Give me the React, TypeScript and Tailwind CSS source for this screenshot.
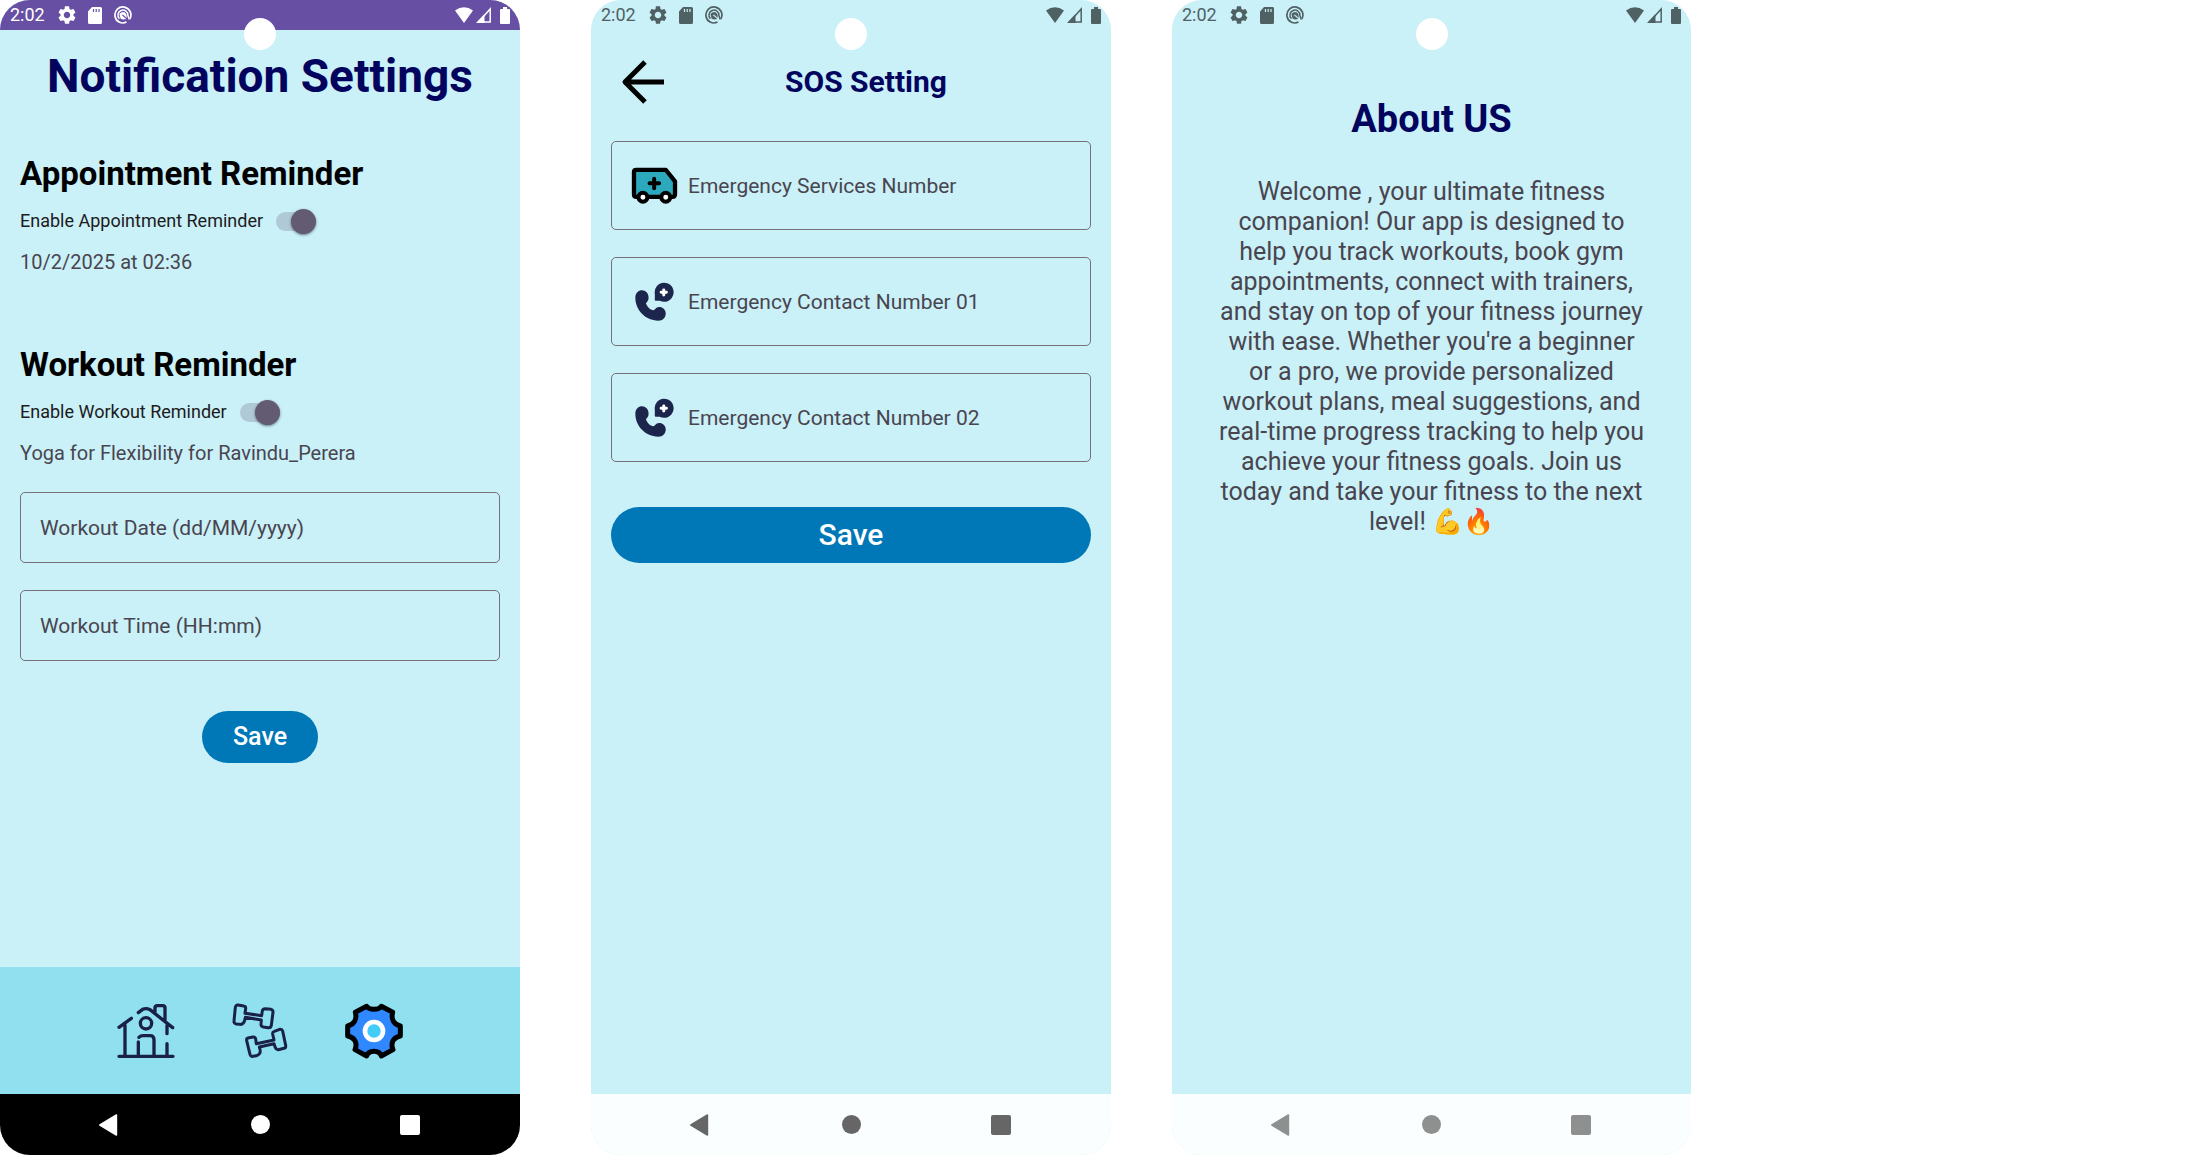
import type { ReactNode } from "react";

function StatusBar({ tone, className }: { tone: string; className: string }) {
  return (
    <header className={`relative flex h-[30px] shrink-0 items-center px-[10px] ${className}`}>
      <span className="w-[48px] text-lg leading-[30px]">2:02</span>
      <svg className="h-[18px] w-[18px]" viewBox="2 2 20 20" fill="currentColor" aria-hidden="true">
        <path d="M19.14 12.94c.04-.3.06-.61.06-.94 0-.32-.02-.64-.07-.94l2.03-1.58c.18-.14.23-.41.12-.61l-1.92-3.32c-.12-.22-.37-.29-.59-.22l-2.39.96c-.5-.38-1.03-.7-1.62-.94l-.36-2.54c-.04-.24-.24-.41-.48-.41h-3.84c-.24 0-.43.17-.47.41l-.36 2.54c-.59.24-1.13.57-1.62.94l-2.39-.96c-.22-.08-.47 0-.59.22L2.74 8.87c-.12.21-.08.47.12.61l2.03 1.58c-.05.3-.09.63-.09.94s.02.64.07.94l-2.03 1.58c-.18.14-.23.41-.12.61l1.92 3.32c.12.22.37.29.59.22l2.39-.96c.5.38 1.03.7 1.62.94l.36 2.54c.05.24.24.41.48.41h3.84c.24 0 .44-.17.47-.41l.36-2.54c.59-.24 1.13-.56 1.62-.94l2.39.96c.22.08.47 0 .59-.22l1.92-3.32c.12-.22.07-.47-.12-.61l-2.01-1.58zM12 15.6c-1.98 0-3.6-1.62-3.6-3.6s1.62-3.6 3.6-3.6 3.6 1.62 3.6 3.6-1.62 3.6-3.6 3.6z" />
      </svg>
      <svg className="ml-3 h-[17px] w-[14px]" viewBox="0 0 14 17" aria-hidden="true">
        <path d="M4 0h8.500a1.500 1.500 0 0 1 1.500 1.500v14a1.500 1.500 0 0 1-1.500 1.500h-11a1.500 1.500 0 0 1-1.500-1.500V4.500z" fill="currentColor" />
        <path d="M5.500 2v3M8.200 2v3M11 2v3" stroke={tone} strokeWidth="1.200" />
      </svg>
      <svg className="ml-3 h-[18px] w-[18px]" viewBox="0 0 18 18" fill="none" stroke="currentColor" aria-hidden="true">
        <path d="M12.500 16.100A8 8 0 1 1 15.800 13" strokeWidth="1.700" />
        <path d="M5.400 12.700A5 5 0 1 1 13.900 9.500L15.200 13.500" strokeWidth="1.500" />
        <path d="M5.500 8.300Q7.500 5.500 10.500 6.500Q13 7.800 12.300 11.500L10.200 9.200Q8.500 7.800 7.500 9.200L11.800 12.800Q8.500 14 6.500 12.200" fill="currentColor" strokeWidth=".5" />
      </svg>
      <svg className="ml-auto h-4 w-[18px]" viewBox="0 0 18 16" fill="currentColor" aria-hidden="true">
        <path d="M0 3.500Q9-3 18 3.500L9 16z" />
      </svg>
      <svg className="ml-[3px] h-4 w-[15px]" viewBox="0 0 15 16" aria-hidden="true">
        <path d="M2.500 14.900L14.200 2V14.900z" fill="none" stroke="currentColor" strokeWidth="1.500" />
        <path d="M0 16L8.500 7V16z" fill="currentColor" />
      </svg>
      <svg className="ml-[9px] h-[17px] w-[10px]" viewBox="0 0 10 17" fill="currentColor" aria-hidden="true">
        <path d="M3 0h4v2h2q1 0 1 1v13q0 1-1 1H1q-1 0-1-1V3q0-1 1-1h2z" />
      </svg>
      <span className="absolute left-1/2 top-[18px] size-8 -translate-x-1/2 rounded-full bg-white" />
    </header>
  );
}

function SystemNav({ className }: { className: string }) {
  return (
    <nav aria-label="System" className={`flex h-[61px] shrink-0 items-center justify-between pl-[98px] pr-[100px] ${className}`}>
      <button type="button" aria-label="Back">
        <svg className="size-[22px]" viewBox="0 0 22 22" fill="currentColor" aria-hidden="true">
          <path d="M1.500 10.200L18 .300Q19.200 0 19.200 1.300V20.700Q19.200 22 18 21.700L1.500 11.800Q.300 11 1.500 10.200z" />
        </svg>
      </button>
      <button type="button" aria-label="Home" className="size-[19px] rounded-full bg-current" />
      <button type="button" aria-label="Recent apps" className="size-5 rounded-xs bg-current" />
    </nav>
  );
}

function Phone({ label, className, children }: { label: string; className: string; children: ReactNode }) {
  return (
    <section aria-label={label} className={`flex min-h-screen flex-col overflow-hidden rounded-[30px] bg-[#caf0f8] ${className}`}>
      {children}
    </section>
  );
}

function Toggle({ id, label }: { id: string; label: string }) {
  return (
    <div className="flex items-center gap-[13px] px-5">
      <label htmlFor={id} className="text-lg leading-[26px] text-[#1d1b20]">{label}</label>
      <input
        id={id}
        type="checkbox"
        role="switch"
        defaultChecked
        className="relative h-[19px] w-10 appearance-none rounded-full bg-[#b0c9d6] after:absolute after:-top-[3px] after:right-0 after:size-[25px] after:rounded-full after:bg-[#625b71] after:shadow-sm after:shadow-black/40"
      />
    </div>
  );
}

function Field({ label, className, icon }: { label: string; className: string; icon?: ReactNode }) {
  return (
    <div className={`mx-5 flex items-center rounded-[5px] border border-[#757079] ${className}`}>
      {icon}
      <input
        type="text"
        aria-label={label}
        placeholder={label}
        className="h-full min-w-0 flex-1 bg-transparent text-[21px] text-[#49454f] outline-none placeholder:text-[#49454f] placeholder:opacity-100"
      />
    </div>
  );
}

function HomeIcon() {
  return (
    <svg className="size-[58px]" viewBox="51 40 174 174" fill="none" stroke="#1a2149" strokeWidth="10" strokeLinecap="round" strokeLinejoin="round" aria-hidden="true">
      <path d="M57 203H219M75 198V110M57 116L94 89M115 72L128 62Q139 57 150 63L218 117M165 70V58Q165 51 172 51H188Q195 51 195 58V98M201 110V135M201 165V200M115 160V200M117 146Q121 141 130 141H150Q162 141 162 153V200" />
      <circle cx="138" cy="104" r="17" />
    </svg>
  );
}

function DumbbellsIcon() {
  return (
    <svg className="size-[58px]" viewBox="392 36 174 174" fill="none" stroke="#1a2149" strokeWidth="9" strokeLinejoin="round" aria-hidden="true">
      <path d="M413 45L430 48Q437 49 436 56L434 70L484 77L486 62Q488 56 494 56L512 58Q519 60 518 67L513 106Q511 114 504 113L489 111Q481 109 482 101L483 90L435 82Q433 96 429 99Q425 104 418 103L408 102Q400 100 401 93L405 52Q407 44 413 45Z" />
      <path d="M443 144L458 141Q465 140 466 147L468 161L521 150L517 132Q516 126 522 124L538 118Q545 117 547 123L556 166Q557 174 551 175L534 179Q528 180 525 173L521 161L477 171Q482 186 478 190Q474 196 468 197L458 199Q451 200 449 193L439 152Q438 145 443 144Z" />
    </svg>
  );
}

function GearIcon() {
  return (
    <svg className="size-[58px]" viewBox="733 36 174 174" aria-hidden="true">
      <path d="M798 49C806 61 834 61 842 49L876 67C870 88 880 103 899 108V138C880 141 868 158 877 179L842 198C835 179 805 179 798 198L763 179C772 158 760 141 741 138V108C760 103 770 88 764 67Z" fill="#2f88ff" stroke="#000" strokeWidth="15" strokeLinejoin="round" />
      <circle cx="820" cy="123" r="27" fill="#43ccf8" stroke="#fff" strokeWidth="14" />
    </svg>
  );
}

function AmbulanceIcon() {
  return (
    <svg className="ml-[19px] mr-[10px] h-[39px] w-[47px] shrink-0" viewBox="62 106 142 117" stroke="#000" strokeLinecap="round" strokeLinejoin="round" aria-hidden="true">
      <path d="M78 117H167L195 152V190Q195 199 187 199H78Q71 199 71 192V124Q71 117 78 117Z" fill="#2ca9bc" strokeWidth="13" />
      <circle cx="98" cy="200" r="13.500" fill="#fff" strokeWidth="12" />
      <circle cx="167" cy="200" r="13.500" fill="#fff" strokeWidth="12" />
      <path d="M132 144V173M118 158H147" strokeWidth="12" />
    </svg>
  );
}

function CallIcon() {
  return (
    <svg className="ml-[23px] mr-[14px] size-[39px] shrink-0" viewBox="75 454 118 118" fill="#1c264d" aria-hidden="true">
      <path d="M96 479C86 479 76 487 76 502C76 540 107 571 145 571C160 571 168 560 168 549C168 538 158 530 149 530C141 530 138 534 134 538C126 543 112 530 108 518C113 513 117 508 116 500C116 488 107 479 96 479Z" />
      <path d="M162 456A29 29 0 1 1 150 511H138Q134 511 135 506V490A29 29 0 0 1 162 456Z" />
      <path d="M162 478V493M154 485H170" stroke="#fff" strokeWidth="9" strokeLinecap="round" />
    </svg>
  );
}

export default function App() {
  return (
    <main className="grid min-h-screen grid-cols-[520fr_71fr_520fr_61fr_519fr_517fr] bg-white font-[Roboto,sans-serif]">
      <Phone label="Notification Settings" className="col-start-1">
        <StatusBar tone="#6750a4" className="bg-[#6750a4] text-white" />
        <h1 className="mt-[19px] text-center text-[46px] font-bold leading-[54px] text-[#03045e]">Notification Settings</h1>
        <h2 className="mt-[51px] px-5 text-[33px] font-bold leading-10 text-black">Appointment Reminder</h2>
        <div className="mt-[14px]">
          <Toggle id="appointment-reminder" label="Enable Appointment Reminder" />
        </div>
        <p className="mt-4 px-5 text-xl leading-6 text-[#49454f]">10/2/2025 at 02:36</p>
        <h2 className="mt-[71px] px-5 text-[33px] font-bold leading-10 text-black">Workout Reminder</h2>
        <div className="mt-[14px]">
          <Toggle id="workout-reminder" label="Enable Workout Reminder" />
        </div>
        <p className="mt-4 px-5 text-xl leading-6 text-[#49454f]">Yoga for Flexibility for Ravindu_Perera</p>
        <Field label="Workout Date (dd/MM/yyyy)" className="mt-[27px] h-[71px] pl-[19px]" />
        <Field label="Workout Time (HH:mm)" className="mt-[27px] h-[71px] pl-[19px]" />
        <button type="button" className="mt-[50px] self-center rounded-full bg-[#0077b6] px-[31px] py-[11px] text-[25px] font-medium leading-[30px] text-white">Save</button>
        <nav aria-label="Main" className="mt-auto flex h-[127px] shrink-0 items-center justify-center gap-14 bg-[#90e0ef]">
          <a href="#home" aria-label="Home"><HomeIcon /></a>
          <a href="#workouts" aria-label="Workouts"><DumbbellsIcon /></a>
          <a href="#settings" aria-label="Settings"><GearIcon /></a>
        </nav>
        <SystemNav className="bg-black text-white" />
      </Phone>

      <Phone label="SOS Setting" className="col-start-3">
        <StatusBar tone="#caf0f8" className="text-[#506164]" />
        <div className="mt-[30px] flex items-center pl-[30px]">
          <button type="button" aria-label="Back">
            <svg className="size-11" viewBox="0 0 44 44" fill="none" stroke="#000" strokeWidth="5" aria-hidden="true">
              <path d="M24 2L4 22L24 42M4 22H43" strokeLinejoin="round" />
            </svg>
          </button>
          <h1 className="flex-1 pr-11 text-center text-[30px] font-bold leading-9 text-[#03045e]">SOS Setting</h1>
        </div>
        <Field label="Emergency Services Number" className="mt-[37px] h-[89px]" icon={<AmbulanceIcon />} />
        <Field label="Emergency Contact Number 01" className="mt-[27px] h-[89px]" icon={<CallIcon />} />
        <Field label="Emergency Contact Number 02" className="mt-[27px] h-[89px]" icon={<CallIcon />} />
        <button type="button" className="mx-5 mt-[45px] rounded-full bg-[#0077b6] py-[10px] text-[30px] font-medium leading-9 text-white">Save</button>
        <div className="flex-1" />
        <SystemNav className="bg-[#fafeff] text-[#666]" />
      </Phone>

      <Phone label="About US" className="col-start-5">
        <StatusBar tone="#caf0f8" className="text-[#506164]" />
        <h1 className="mt-[66px] text-center text-[38px] font-bold leading-[46px] text-[#03045e]">About US</h1>
        <p className="mt-[35px] px-[43px] text-center text-[25px] leading-[30px] text-[#49454f]">
          Welcome , your ultimate fitness companion! Our app is designed to help you track workouts, book gym appointments, connect with trainers, and stay on top of your fitness journey with ease. Whether you're a beginner or a pro, we provide personalized workout plans, meal suggestions, and real-time progress tracking to help you achieve your fitness goals. Join us today and take your fitness to the next level! 💪🔥
        </p>
        <div className="flex-1" />
        <SystemNav className="bg-[#fafeff] text-[#8e9090]" />
      </Phone>
    </main>
  );
}
